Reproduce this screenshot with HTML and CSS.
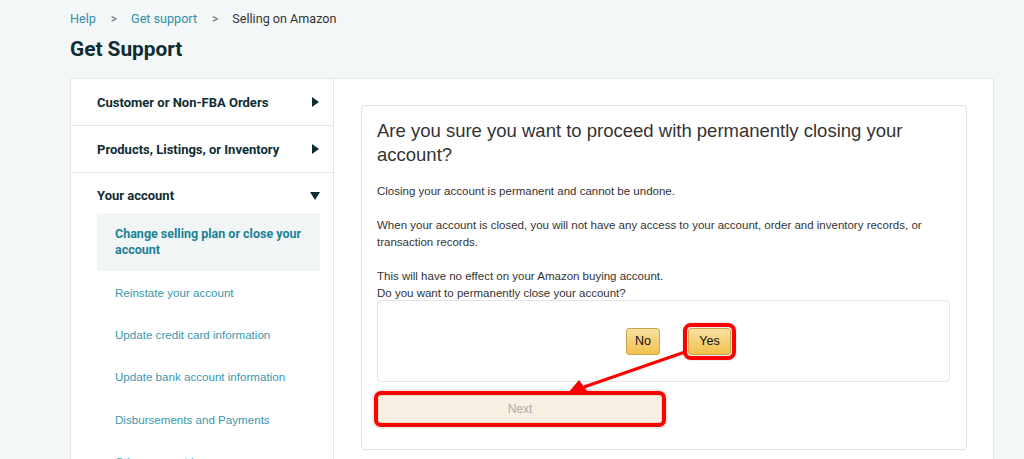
FILE: index.html
```html
<!DOCTYPE html>
<html lang="en">
<head>
	<meta charset="UTF-8">
	<title>Get Support</title>
	<link rel="stylesheet" href="styles.css">
</head>
<body>
	<div class="crumbs">
		<a href="javascript:;">Help</a>
		<span class="sep">&gt;</span>
		<a href="javascript:;">Get support</a>
		<span class="sep">&gt;</span>
		<span class="here">Selling on Amazon</span>
	</div>
	<h1 class="title">Get Support</h1>

	<div class="panel">
		<div class="side">
			<div class="topic">
				<span>Customer or Non-FBA Orders</span>
				<i class="tri-right"></i>
			</div>
			<div class="topic">
				<span>Products, Listings, or Inventory</span>
				<i class="tri-right"></i>
			</div>
			<div class="topic open">
				<span>Your account</span>
				<i class="tri-down"></i>
			</div>
			<ul class="sub">
				<li class="active"><a href="javascript:;">Change selling plan or close your account</a></li>
				<li><a href="javascript:;">Reinstate your account</a></li>
				<li><a href="javascript:;">Update credit card information</a></li>
				<li><a href="javascript:;">Update bank account information</a></li>
				<li><a href="javascript:;">Disbursements and Payments</a></li>
				<li><a href="javascript:;">Other account issues</a></li>
			</ul>
		</div>

		<div class="main">
			<div class="card">
				<h2>Are you sure you want to proceed with permanently closing your account?</h2>
				<p>Closing your account is permanent and cannot be undone.</p>
				<p>When your account is closed, you will not have any access to your account, order and inventory records, or transaction records.</p>
				<p class="tight">This will have no effect on your Amazon buying account.<br>Do you want to permanently close your account?</p>
				<div class="choice">
					<button class="btn no">No</button>
					<button class="btn yes mark">Yes</button>
				</div>
				<button class="next mark">Next</button>
			</div>
		</div>
	</div>

	<!-- annotation arrow -->
	<svg class="arrow" width="1024" height="459" viewBox="0 0 1024 459">
		<line x1="685" y1="352" x2="584" y2="387" stroke="#f00" stroke-width="3"/>
		<polygon points="568,393 579,380 588,392" fill="#f00"/>
	</svg>
</body>
</html>
```

FILE: styles.css
```css
*{margin: 0; padding: 0; box-sizing: border-box;}
body{background: #f4f7f8; font-family: Roboto, "Liberation Sans", Arial, sans-serif; color: #0f2c33; min-height: 459px; overflow: hidden;}
a{text-decoration: none;}

.crumbs{padding: 9px 0 0 70px; height: 28px; font-size: 12.6px; line-height: 18px; display: flex; align-items: center;}
.crumbs a{color: #2f8fa6;}
.crumbs .sep{color: #666; margin: 0 14px 0 15px; font-size: 12px;}
.crumbs .here{color: #333;}

.title{padding: 9px 0 0 70px; height: 50px; font-size: 20.8px; line-height: 24px; font-weight: 700; color: #0f2c33;}

.panel{margin-left: 70px; width: 924px; height: 420px; background: #fff; border: 1px solid #e3e7e8; display: flex;}

.side{width: 263px; border-right: 1px solid #e3e7e8; flex-shrink: 0;}
.topic{height: 47px; padding: 0 13px 0 26px; display: flex; align-items: center; justify-content: space-between; font-size: 13px; font-weight: 700; color: #0f2c33; border-bottom: 1px solid #e3e7e8;}
.topic.open{border-bottom: none; height: 40px; padding-top: 5px;}
.tri-right{width: 0; height: 0; border-top: 5px solid transparent; border-bottom: 5px solid transparent; border-left: 7px solid #0f2c33; margin-right: 1px;}
.tri-down{width: 0; height: 0; border-left: 5px solid transparent; border-right: 5px solid transparent; border-top: 8px solid #0f2c33;}

.sub{list-style: none; padding: 0 13px 0 26px;}
.sub li{padding: 0 18px; height: 42.3px; display: flex; align-items: center; font-family: "Liberation Sans", Arial, sans-serif; font-size: 11.6px;}
.sub li a{color: #3a97ab;}
.sub li.active{background: #f1f5f6; height: 58px; line-height: 16px; font-family: Roboto, "Liberation Sans", Arial, sans-serif; font-size: 12.5px;}
.sub li.active a{color: #1b8295; font-weight: 700;}

.main{flex: 1; padding: 26px 26px 0 27px;}
.card{border: 1px solid #e2e2e2; border-radius: 4px; padding: 13px 16px 26px 15px; height: 345px; font-family: "Liberation Sans", Arial, sans-serif; color: #333;}
.card h2{font-size: 18.5px; font-weight: 400; line-height: 24px; color: #333; margin-bottom: 16px;}
.card p{font-size: 11.5px; line-height: 17px; margin-bottom: 17px;}
.card p.tight{margin-bottom: 0;}

.choice{border: 1px solid #e4e4e4; border-radius: 4px; height: 82px; margin-top: -2px; display: flex; align-items: center; justify-content: center; gap: 28px; padding-left: 30px;}
.btn{height: 27px; padding: 0; font-family: "Liberation Sans", Arial, sans-serif; font-size: 12.5px; color: #111; border: 1px solid #c9a54b; border-radius: 3px; background: linear-gradient(#f7dfa5, #f0c14b);}
.btn.no{width: 34px;}
.btn.yes{width: 43px;}
.mark{outline: 4px solid #f00; outline-offset: 0; border-radius: 3px; box-shadow: 0 0 0 6px rgba(0,0,0,0.07);}
.btn.mark{outline-offset: 1px;}

.next{display: block; margin-top: 13px; margin-left: 1px; width: 284px; height: 28px; background: #f7f0e3; border: 1px solid #e8dfc9; font-family: "Liberation Sans", Arial, sans-serif; font-size: 12px; color: #aaa;}

.arrow{position: absolute; left: 0; top: 0; pointer-events: none;}
```
